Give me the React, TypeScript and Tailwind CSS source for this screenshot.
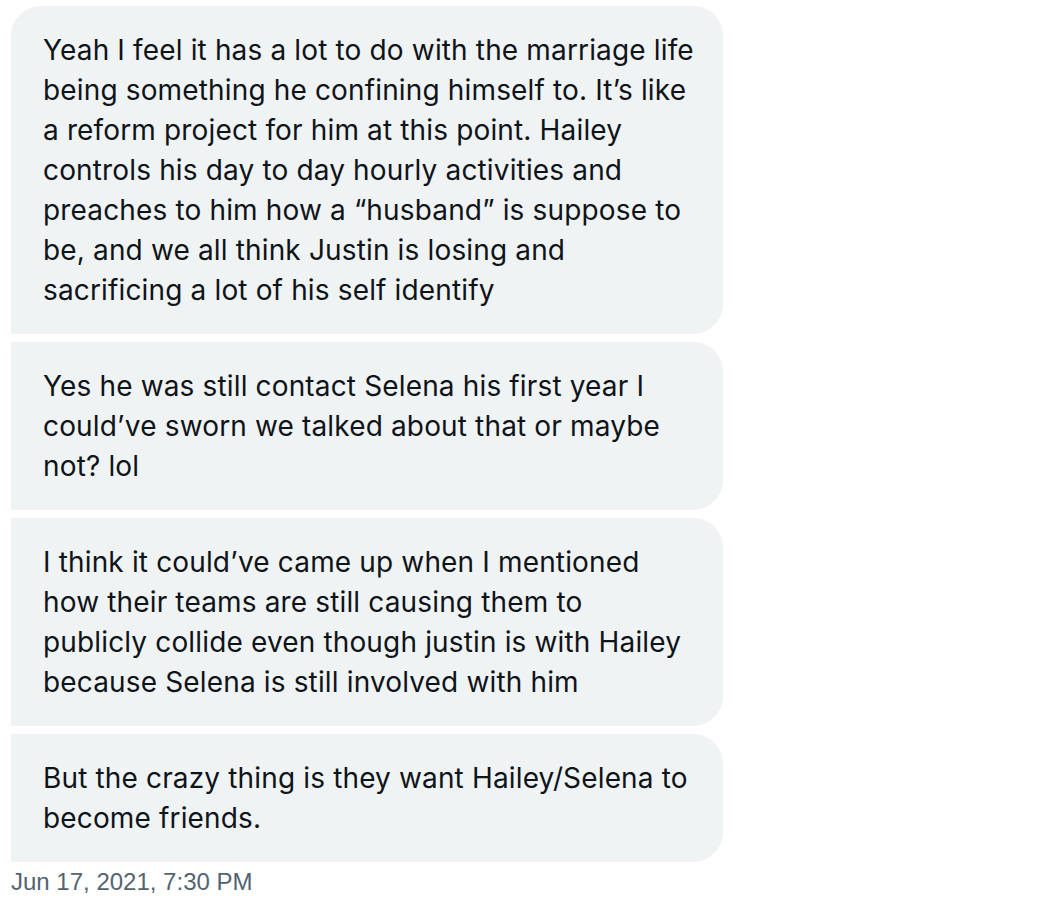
const messages: string[][] = [
  [
    "Yeah I feel it has a lot to do with the marriage life",
    "being something he confining himself to. It\u2019s like",
    "a reform project for him at this point. Hailey",
    "controls his day to day hourly activities and",
    "preaches to him how a \u201chusband\u201d is suppose to",
    "be, and we all think Justin is losing and",
    "sacrificing a lot of his self identify",
  ],
  [
    "Yes he was still contact Selena his first year I",
    "could\u2019ve sworn we talked about that or maybe",
    "not? lol",
  ],
  [
    "I think it could\u2019ve came up when I mentioned",
    "how their teams are still causing them to",
    "publicly collide even though justin is with Hailey",
    "because Selena is still involved with him",
  ],
  [
    "But the crazy thing is they want Hailey/Selena to",
    "become friends.",
  ],
];

function Bubble({ lines, first }: { lines: string[]; first: boolean }) {
  return (
    <div
      className={
        "w-[712px] bg-[#eff3f4] px-8 py-6 rounded-r-[30px] " +
        (first ? "rounded-tl-[30px]" : "")
      }
    >
      <p className="whitespace-nowrap text-[28px] leading-[40px] tracking-[0.15px] text-[#0f1419] font-['Inter',sans-serif]">
        {lines.map((line, i) => (
          <span key={i} className="block">
            {line}
          </span>
        ))}
      </p>
    </div>
  );
}

export default function App() {
  return (
    <div className="min-h-screen bg-white pl-[11px] pt-[6px]">
      <div className="flex flex-col gap-2">
        {messages.map((lines, i) => (
          <Bubble key={i} lines={lines} first={i === 0} />
        ))}
      </div>
      <div className="mt-1 text-[24px] leading-8 text-[#536471] font-['Liberation_Sans',Arial,sans-serif]">
        Jun 17, 2021, 7:30 PM
      </div>
    </div>
  );
}
